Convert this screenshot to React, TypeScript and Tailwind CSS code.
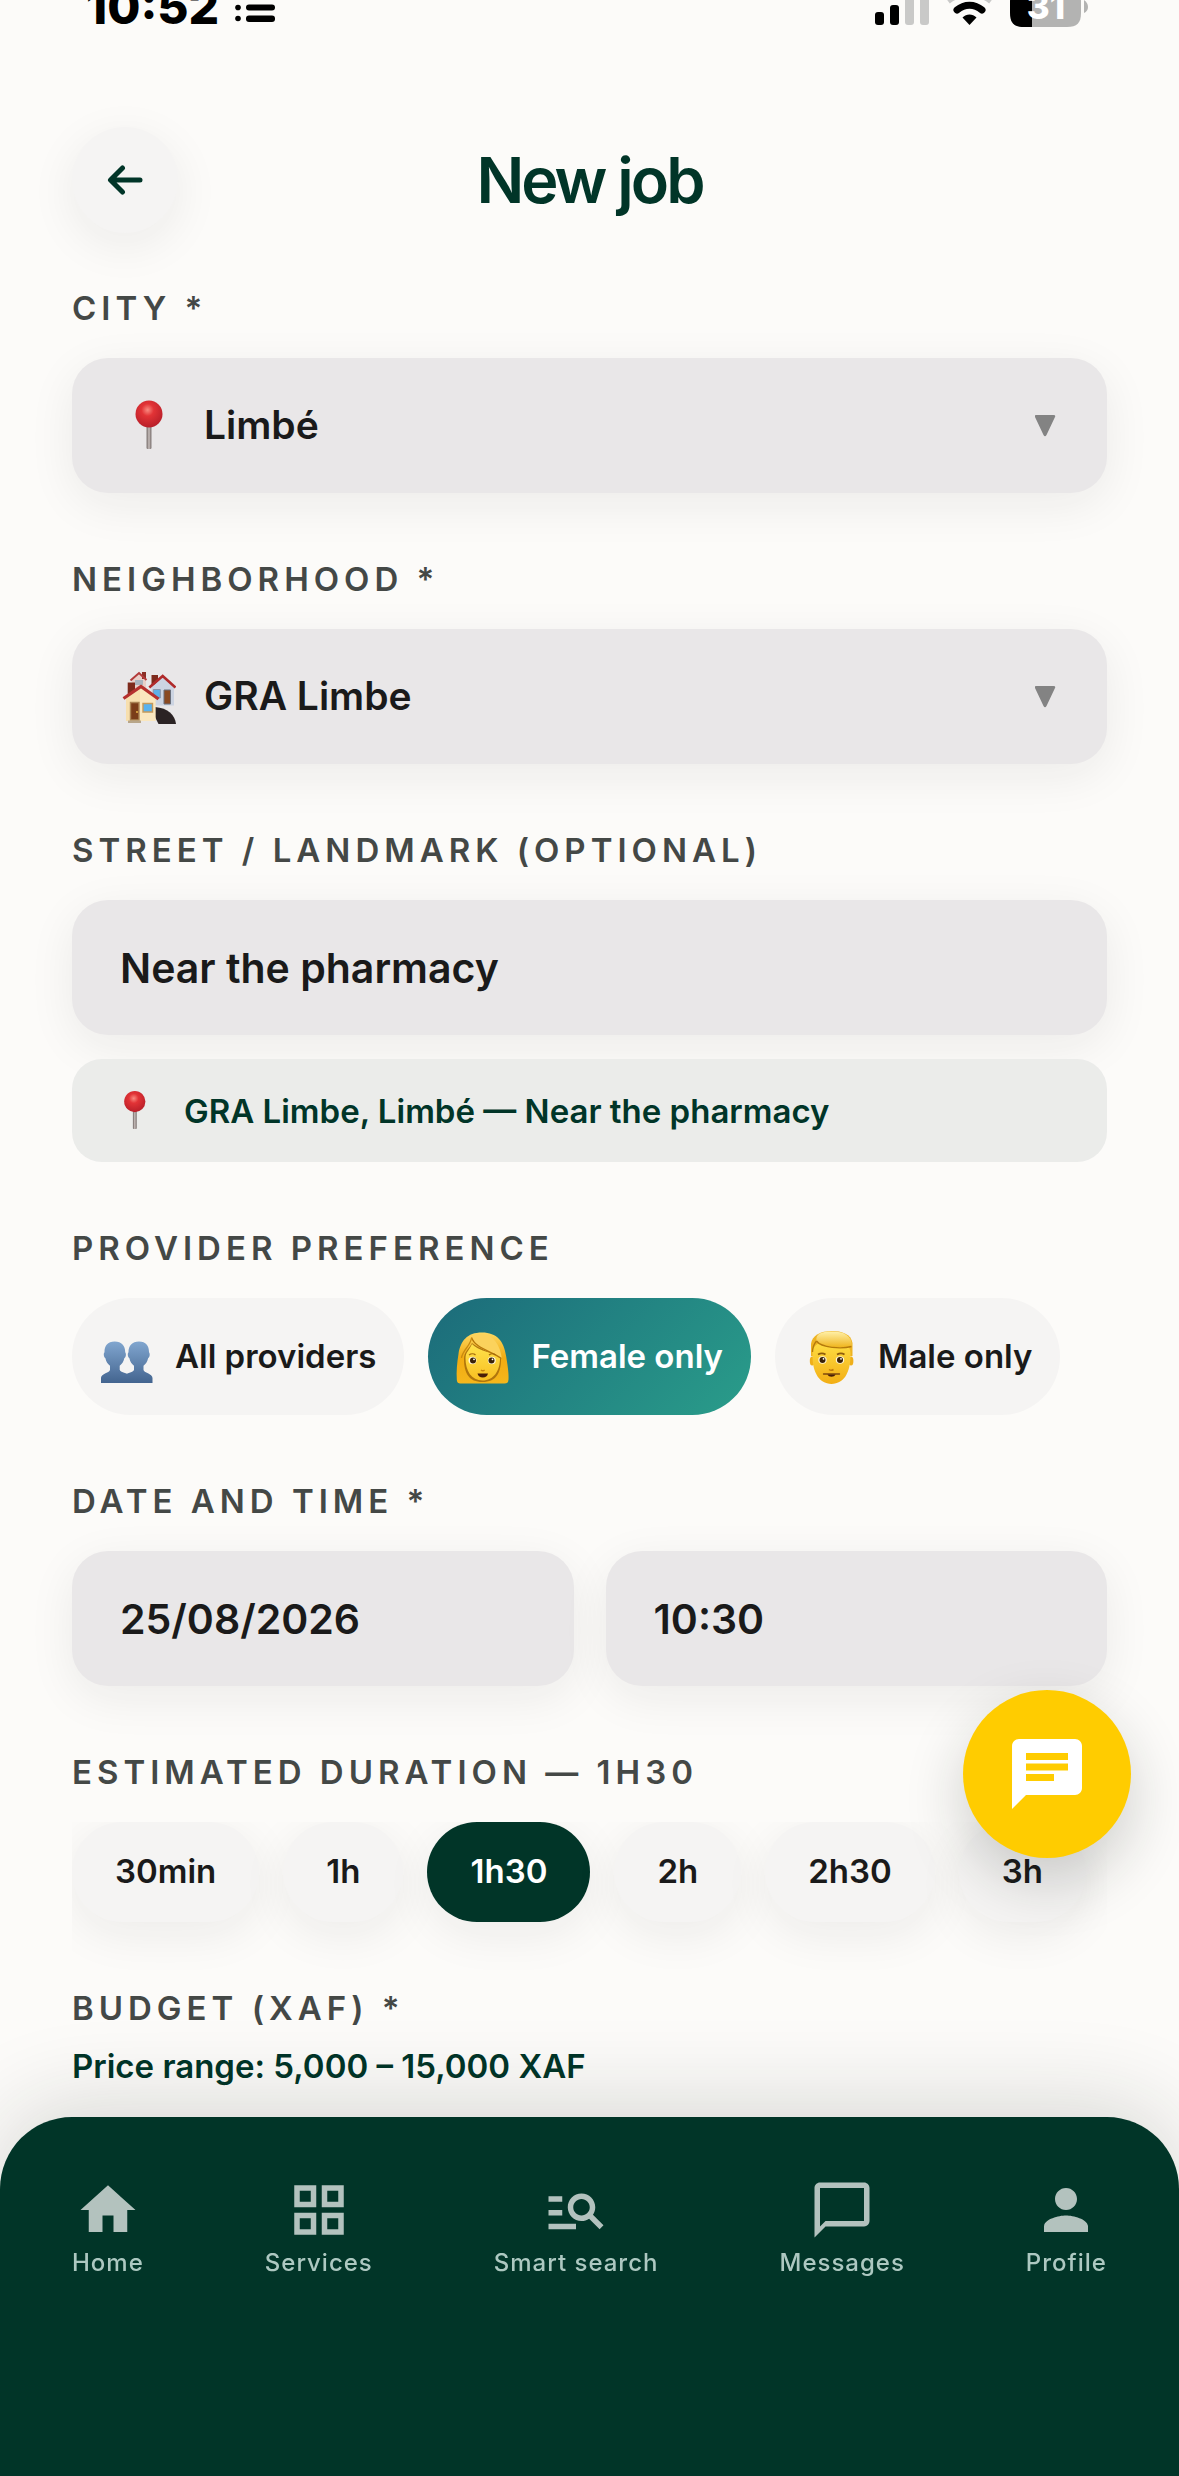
import { useState } from "react";
import type { ReactNode } from "react";
import { MdChat, MdChatBubbleOutline, MdGridView, MdHome, MdManageSearch, MdPerson } from "react-icons/md";

const PROVIDERS = [
  { label: "All providers", icon: <PeopleEmoji /> },
  { label: "Female only", icon: <WomanEmoji /> },
  { label: "Male only", icon: <ManEmoji /> },
];

const DURATIONS = ["30min", "1h", "1h30", "2h", "2h30", "3h"];

const NAV_ITEMS = [
  { label: "Home", icon: MdHome },
  { label: "Services", icon: MdGridView },
  { label: "Smart search", icon: MdManageSearch },
  { label: "Messages", icon: MdChatBubbleOutline },
  { label: "Profile", icon: MdPerson },
];

const labelClass = "block text-[33px] leading-10 font-semibold tracking-[5px] uppercase text-[#444846]";
const fieldClass = "h-[135px] w-full rounded-[36px] bg-[#e9e7e8] px-12 shadow-[0_12px_48px_rgba(26,28,27,0.07)]";

function PinEmoji({ className }: { className: string }) {
  return (
    <svg viewBox="0 0 56 56" className={className} aria-hidden="true">
      <defs>
        <radialGradient id="pin-ball" cx="0.45" cy="0.35" r="0.65">
          <stop offset="0" stopColor="#f98a80" />
          <stop offset="0.35" stopColor="#e23336" />
          <stop offset="1" stopColor="#b81f29" />
        </radialGradient>
        <linearGradient id="pin-stem" x1="0" x2="1" y1="0" y2="0">
          <stop offset="0" stopColor="#6d6361" />
          <stop offset="0.5" stopColor="#c9c0bd" />
          <stop offset="1" stopColor="#6d6361" />
        </linearGradient>
      </defs>
      <rect x="26.6" y="26" width="4.8" height="25" rx="1" fill="url(#pin-stem)" />
      <circle cx="29" cy="16" r="13.500" fill="url(#pin-ball)" />
    </svg>
  );
}

function HousesEmoji({ className }: { className: string }) {
  return (
    <svg viewBox="0 0 56 56" className={className} aria-hidden="true">
      <path d="M12 10 19 4l7 6v9H12z" fill="#e8cfc9" />
      <path d="M15 11h8v5h-8z" fill="#a9b4bf" />
      <path d="M22 3h4v7h-4z" fill="#8a2f26" />
      <path d="m10.500 11.500 8.500-7.500 7.500 7" fill="none" stroke="#b23a3a" strokeWidth="2" />
      <path d="M31.500 6h6.500v10h-6.500z" fill="#7d2a1c" />
      <path d="M31.500 18 42.700 8 54 18v18.500H31.500z" fill="#ccd4e2" />
      <path d="M33.300 20.500h7v8.500h-7z" fill="#5cb0ea" stroke="#8a97ab" strokeWidth="1" />
      <path d="M44 21h6.500v14H44z" fill="#8a4a22" stroke="#6b6f7a" strokeWidth="1" />
      <path d="m29.300 18.500 13.400-11.500L55.500 18.500" fill="none" stroke="#b02a2a" strokeWidth="2.600" />
      <path d="M35 38c13 1 20 8 21 17H38.500L35 48z" fill="#2b2324" />
      <path d="M7.700 13.500H15V26H7.700z" fill="#7d2a1c" />
      <path d="M6 28 21 17l14.500 11v24H6z" fill="#f7dfae" />
      <path d="M20 20h4l11.500 9v23H20z" fill="#fbe9c6" opacity="0.700" />
      <path d="M10.500 33.500H19V51h-8.500z" fill="#7a3c19" stroke="#a98253" strokeWidth="1.400" />
      <circle cx="17" cy="43" r="0.900" fill="#f3c14b" />
      <path d="M23 34.500h9.500v8.500H23z" fill="#58b2ef" stroke="#c49a5c" strokeWidth="1.400" />
      <path d="M8 51.500h13v2.500H8z" fill="#b8a68a" />
      <path d="M3.500 29.500 21 17.500l17.500 12.500" fill="none" stroke="#b5302e" strokeWidth="3.200" />
    </svg>
  );
}

function PeopleEmoji() {
  return (
    <svg viewBox="0 0 56 56" className="size-14 shrink-0" aria-hidden="true">
      <defs>
        <linearGradient id="people" x1="0" x2="0" y1="12" y2="54" gradientUnits="userSpaceOnUse">
          <stop offset="0" stopColor="#82a7d0" />
          <stop offset="1" stopColor="#43648f" />
        </linearGradient>
      </defs>
      <path
        d="M42 12.500c-7 0-10.500 4.500-10.500 10.500 0 .8-.9 1-.7 3 .2 1.900 1 2.800 1.600 3.300.8 3.500 2.300 5.700 4.600 7.500v4c0 3-12 3.700-12 8.200v5h30.500v-5c0-4.500-9-5.200-9-8.200v-4c2.300-1.800 3.800-4 4.600-7.500.6-.5 1.400-1.400 1.600-3.300.2-2-.7-2.200-.7-3 0-6-3-10.500-10-10.500z"
        fill="url(#people)"
      />
      <path
        d="M17.700 12.500c7 0 10.500 4.500 10.500 10.500 0 .8.900 1 .7 3-.2 1.900-1 2.800-1.600 3.300-.8 3.500-2.300 5.700-4.600 7.500v4c0 3 12 3.700 12 8.200v5H4v-5c0-4.500 9-5.200 9-8.200v-4c-2.300-1.800-3.800-4-4.600-7.500-.6-.5-1.400-1.400-1.600-3.300-.2-2 .7-2.200.7-3 0-6 3-10.500 10.200-10.500z"
        fill="url(#people)"
      />
    </svg>
  );
}

function WomanEmoji() {
  return (
    <svg viewBox="0 0 56 56" className="size-14 shrink-0" aria-hidden="true">
      <defs>
        <linearGradient id="woman-hair" x1="0" x2="0" y1="0" y2="1">
          <stop offset="0" stopColor="#fcd862" />
          <stop offset="0.5" stopColor="#f2ab12" />
          <stop offset="1" stopColor="#f5b71c" />
        </linearGradient>
        <linearGradient id="face" x1="0" x2="0" y1="0" y2="1">
          <stop offset="0" stopColor="#ffe24b" />
          <stop offset="1" stopColor="#f8c022" />
        </linearGradient>
      </defs>
      <path
        d="M29 3.500c15 0 22 9 24 23 1.500 9 3 18 2.500 24-.2 3-1.500 4-4 4H8c-3 0-4-1-4.200-4C3.300 43 4 34 5.500 25 7.500 12 14 3.500 29 3.500z"
        fill="url(#woman-hair)"
      />
      <path d="M11 30c0 14 5 23 18.500 23S48 44 48 30c-1-7-18-7-29-16-4 7-8 9-8 16z" fill="#9a6208" opacity="0.750" />
      <path d="M12.500 29c0 13 6 22.500 17 22.500S47 42 47 29c-1-6-18-4-28-14-3 7-6.500 8-6.500 14z" fill="url(#face)" />
      <path d="M18 8c4 12 20 14 31 22-2-14-8-24-20-25-5 0-9 1-11 3z" fill="#fbd25c" />
      <path d="M18.500 8.500c4 11 19 13 30 21" fill="none" stroke="#b57608" strokeWidth="1.300" />
      <path d="M18.500 9c-1 8-9 12-10 20" fill="none" stroke="#c98a10" strokeWidth="1.300" />
      <ellipse cx="19.500" cy="31.500" rx="4" ry="3.700" fill="#fff6d8" />
      <ellipse cx="38.800" cy="31.500" rx="4" ry="3.700" fill="#fff6d8" />
      <circle cx="20" cy="31.500" r="3" fill="#3a2208" />
      <circle cx="38.500" cy="31.500" r="3" fill="#3a2208" />
      <circle cx="21" cy="30.300" r="0.900" fill="#fff" />
      <circle cx="39.500" cy="30.300" r="0.900" fill="#fff" />
      <path d="M16 26c2-1.500 5-1.500 6.500 0M36 26c2-1.500 5-1.500 6.500 0" fill="none" stroke="#a3690a" strokeWidth="1.200" />
      <path d="M28 41q1.800 1.500 3.600 0" fill="none" stroke="#c8840e" strokeWidth="1.400" />
      <path d="M24.500 44.500h10.500c-.5 2.500-2.500 4-5.200 4s-4.800-1.500-5.300-4z" fill="#4a1f08" />
    </svg>
  );
}

function ManEmoji() {
  return (
    <svg viewBox="0 0 56 56" className="size-14 shrink-0" aria-hidden="true">
      <defs>
        <linearGradient id="man-face" x1="0" x2="0" y1="0" y2="1">
          <stop offset="0" stopColor="#ffdf45" />
          <stop offset="1" stopColor="#f2ae14" />
        </linearGradient>
        <linearGradient id="man-hair" x1="0" x2="0" y1="0" y2="1">
          <stop offset="0" stopColor="#fff0a8" />
          <stop offset="1" stopColor="#f0b51e" />
        </linearGradient>
      </defs>
      <path d="M11 27V15C12 6 21 2 31.500 2S51 5 52.500 14v13z" fill="#eeb322" />
      <ellipse cx="12.200" cy="32" rx="2.400" ry="4.500" fill="#efaf1a" />
      <ellipse cx="51" cy="32" rx="2.400" ry="4.500" fill="#efaf1a" />
      <path d="M12.500 24c0-8 7-12 19-12s19 4 19 12c0 8-.5 15-4 21.500C43.500 51.500 37.500 55 31.500 55s-12-3.500-15-9.500C13 39 12.500 32 12.500 24z" fill="url(#man-face)" />
      <path d="M16.500 12C15 4 23 2.500 32 2.500c12 0 20 4 20 15-10 1.500-31 1-35.500-5.500z" fill="url(#man-hair)" />
      <path d="M16.500 12c5 7 25 8 35 5.500M16.500 12c-2.500 3-4 6-4 11" fill="none" stroke="#b57a0c" strokeWidth="1.300" />
      <ellipse cx="22.500" cy="31" rx="4.200" ry="3.700" fill="#fff6d8" />
      <ellipse cx="40" cy="31" rx="4.200" ry="3.700" fill="#fff6d8" />
      <circle cx="22.500" cy="31" r="3" fill="#3a2208" />
      <circle cx="40" cy="31" r="3" fill="#3a2208" />
      <circle cx="23.500" cy="29.800" r="0.900" fill="#fff" />
      <circle cx="41" cy="29.800" r="0.900" fill="#fff" />
      <path d="M18 25.500q4-2.200 7.500 0M37 25.500q4-2.200 7.500 0" fill="none" stroke="#8f5c0a" strokeWidth="1.800" />
      <path d="M29 40.500q2.200 1.500 4.500 0" fill="none" stroke="#c07a0c" strokeWidth="1.500" />
      <path d="M23.500 45h16" stroke="#7d480c" strokeWidth="1.300" strokeLinecap="round" />
      <path d="M27.500 45.500h8c-.8 1.600-2 2.200-4 2.200s-3.200-.6-4-2.200z" fill="#4a1f08" />
    </svg>
  );
}

function StatusBar() {
  return (
    <div className="flex h-[27px] items-end justify-between overflow-hidden pr-[91px] pl-[86px]">
      <div className="flex items-end gap-4">
        <span className="text-[48px] leading-10 font-extrabold text-black">10:52</span>
        <svg viewBox="0 0 40 27" className="h-[27px] w-10" aria-hidden="true">
          <circle cx="3" cy="7.500" r="2.800" />
          <circle cx="3" cy="18.500" r="2.800" />
          <rect x="11" y="4.500" width="29" height="6" rx="3" />
          <rect x="11" y="15.500" width="29" height="6.500" rx="3" />
        </svg>
      </div>
      <svg viewBox="0 0 213 27" className="h-[27px] w-[213px]" aria-hidden="true">
        <rect x="0" y="12" width="9" height="13" rx="3" />
        <rect x="15" y="5" width="9" height="20" rx="3" />
        <rect x="30" y="-8" width="9" height="33" rx="3" fill="#c9c9c8" />
        <rect x="45" y="-14" width="9" height="39" rx="3" fill="#c9c9c8" />
        <path d="M73 1c13-10 30-10 43 0" fill="none" stroke="#c9c9c8" strokeWidth="6" />
        <path d="M82 10c7.500-6.500 17.500-6.500 25 0" fill="none" stroke="#000" strokeWidth="7" strokeLinecap="round" />
        <path d="M94.500 25 87.500 17.500c4-4 10-4 14 0z" />
        <path d="M150-12h42c11 0 14 4 14 14v11c0 10-4 14-14 14h-42c-11 0-14-4-14-14V2c0-10 3-14 14-14z" fill="#b3b3b2" />
        <path d="M157-12v39h-8c-10 0-14-4-14-14V2c0-10 4-14 14-14z" />
        <path d="M209 0q4 3 4 7t-4 6z" fill="#b3b3b2" />
        <text x="171" y="19" textAnchor="middle" fontSize="35" fontWeight="800" fill="#fff">
          31
        </text>
      </svg>
    </div>
  );
}

function SelectField({ id, label, icon, value }: { id: string; label: string; icon: ReactNode; value: string }) {
  return (
    <div>
      <label htmlFor={id} className={labelClass}>
        {label}
      </label>
      <div className={`${fieldClass} mt-[30px] flex items-center gap-7`}>
        {icon}
        <select
          id={id}
          defaultValue={value}
          className="h-full min-w-0 flex-1 appearance-none bg-transparent text-[39px] font-semibold text-[#1a1a1a] outline-none"
        >
          <option>{value}</option>
        </select>
        <svg viewBox="0 0 24 24" className="pointer-events-none size-6" fill="#838383" aria-hidden="true">
          <path d="M1.500 1h17q2.500 0 1.500 2L11.500 21q-1.500 2.500-3 0L0 3q-1-2 1.500-2z" />
        </svg>
      </div>
    </div>
  );
}

export default function App() {
  const [provider, setProvider] = useState("Female only");
  const [duration, setDuration] = useState("1h30");

  return (
    <div className="min-h-screen bg-[#fcfbf9] pb-[390px] font-[Inter,sans-serif]">
      <StatusBar />

      <header className="mt-[100px] grid grid-cols-[106px_1fr_106px] items-center px-[72px]">
        <button
          type="button"
          aria-label="Back"
          className="flex size-[106px] cursor-pointer items-center justify-center rounded-full bg-[#f5f4f3] shadow-[0_12px_48px_rgba(26,28,27,0.07)]"
        >
          <svg viewBox="0 0 36 36" className="size-9" fill="none" stroke="#013528" strokeWidth="5" strokeLinecap="round" strokeLinejoin="round" aria-hidden="true">
            <path d="M33 18H4M15.500 6 3.500 18l12 12" />
          </svg>
        </button>
        <h1 className="text-center text-[63px] leading-[72px] font-semibold tracking-[-3px] text-[#013528]">New job</h1>
      </header>

      <main className="mt-[55px] flex flex-col gap-[66px] px-[72px]">
        <SelectField id="city" label="City *" icon={<PinEmoji className="size-14 shrink-0" />} value="Limbé" />
        <SelectField
          id="neighborhood"
          label="Neighborhood *"
          icon={<HousesEmoji className="size-14 shrink-0" />}
          value="GRA Limbe"
        />

        <div>
          <label htmlFor="street" className={labelClass}>
            Street / Landmark (optional)
          </label>
          <input
            id="street"
            type="text"
            defaultValue="Near the pharmacy"
            className={`${fieldClass} mt-[30px] block text-[41px] font-semibold text-[#1a1a1a] outline-none`}
          />
          <p className="mt-6 flex h-[103px] items-center gap-7 rounded-[30px] bg-[#ebecea] px-10 text-[33px] leading-10 font-semibold text-[#013528]">
            <PinEmoji className="size-11 shrink-0" />
            GRA Limbe, Limbé — Near the pharmacy
          </p>
        </div>

        <section>
          <h2 className={labelClass}>Provider preference</h2>
          <div className="mt-[30px] flex gap-6">
            {PROVIDERS.map((item) => (
              <button
                key={item.label}
                type="button"
                aria-pressed={provider === item.label}
                onClick={() => setProvider(item.label)}
                className={`flex h-[117px] shrink-0 cursor-pointer items-center gap-[22px] rounded-full pr-7 pl-[25px] text-[33px] font-semibold ${
                  provider === item.label
                    ? "bg-linear-135 from-[#1c6b7a] to-[#2a9d8a] text-white"
                    : "bg-[#f5f4f3] text-[#1a1a1a]"
                }`}
              >
                {item.icon}
                {item.label}
              </button>
            ))}
          </div>
        </section>

        <div>
          <label htmlFor="date" className={labelClass}>
            Date and time *
          </label>
          <div className="mt-[30px] grid grid-cols-2 gap-8">
            <input
              id="date"
              type="text"
              defaultValue="25/08/2026"
              className={`${fieldClass} text-[41px] font-semibold text-[#1a1a1a] outline-none`}
            />
            <input
              type="text"
              aria-label="Time"
              defaultValue="10:30"
              className={`${fieldClass} text-[41px] font-semibold text-[#1a1a1a] outline-none`}
            />
          </div>
        </div>

        <section>
          <h2 className={labelClass}>Estimated duration — {duration}</h2>
          {/* bottom padding keeps the chip shadows inside the scroller */}
          <div className="mt-[30px] -mb-12 flex gap-6 overflow-x-auto pb-12 [scrollbar-width:none]">
            {DURATIONS.map((item) => (
              <button
                key={item}
                type="button"
                aria-pressed={duration === item}
                onClick={() => setDuration(item)}
                className={`h-[100px] shrink-0 cursor-pointer rounded-full px-[43px] text-[33px] font-semibold shadow-[0_12px_48px_rgba(26,28,27,0.07)] ${
                  duration === item ? "bg-[#013528] text-white" : "bg-[#f5f4f3] text-[#1a1a1a]"
                }`}
              >
                {item}
              </button>
            ))}
          </div>
        </section>

        <section>
          <h2 className={labelClass}>Budget (XAF) *</h2>
          <p className="mt-[18px] text-[33px] leading-10 font-semibold text-[#013528]">Price range: 5,000 – 15,000 XAF</p>
        </section>
      </main>

      <button
        type="button"
        aria-label="Open chat"
        className="fixed right-12 bottom-[618px] z-20 flex size-[168px] cursor-pointer items-center justify-center rounded-full bg-[#ffcc00] text-white shadow-[0_24px_60px_rgba(26,28,27,0.2)]"
      >
        <MdChat className="size-[84px]" />
      </button>

      <nav className="fixed inset-x-0 bottom-0 z-10 flex h-[359px] items-start justify-between rounded-t-[72px] bg-[#013528] px-[72px] pt-[60px] shadow-[0_-12px_90px_rgba(26,28,27,0.16)]">
        {NAV_ITEMS.map(({ label, icon: Icon }) => (
          <a key={label} href="#" className="flex flex-col items-center gap-1 text-[24px] leading-8 font-medium tracking-[1px] text-[#adc8c1]">
            <Icon className="size-[66px] text-[#b3c2be]" />
            {label}
          </a>
        ))}
      </nav>
    </div>
  );
}
